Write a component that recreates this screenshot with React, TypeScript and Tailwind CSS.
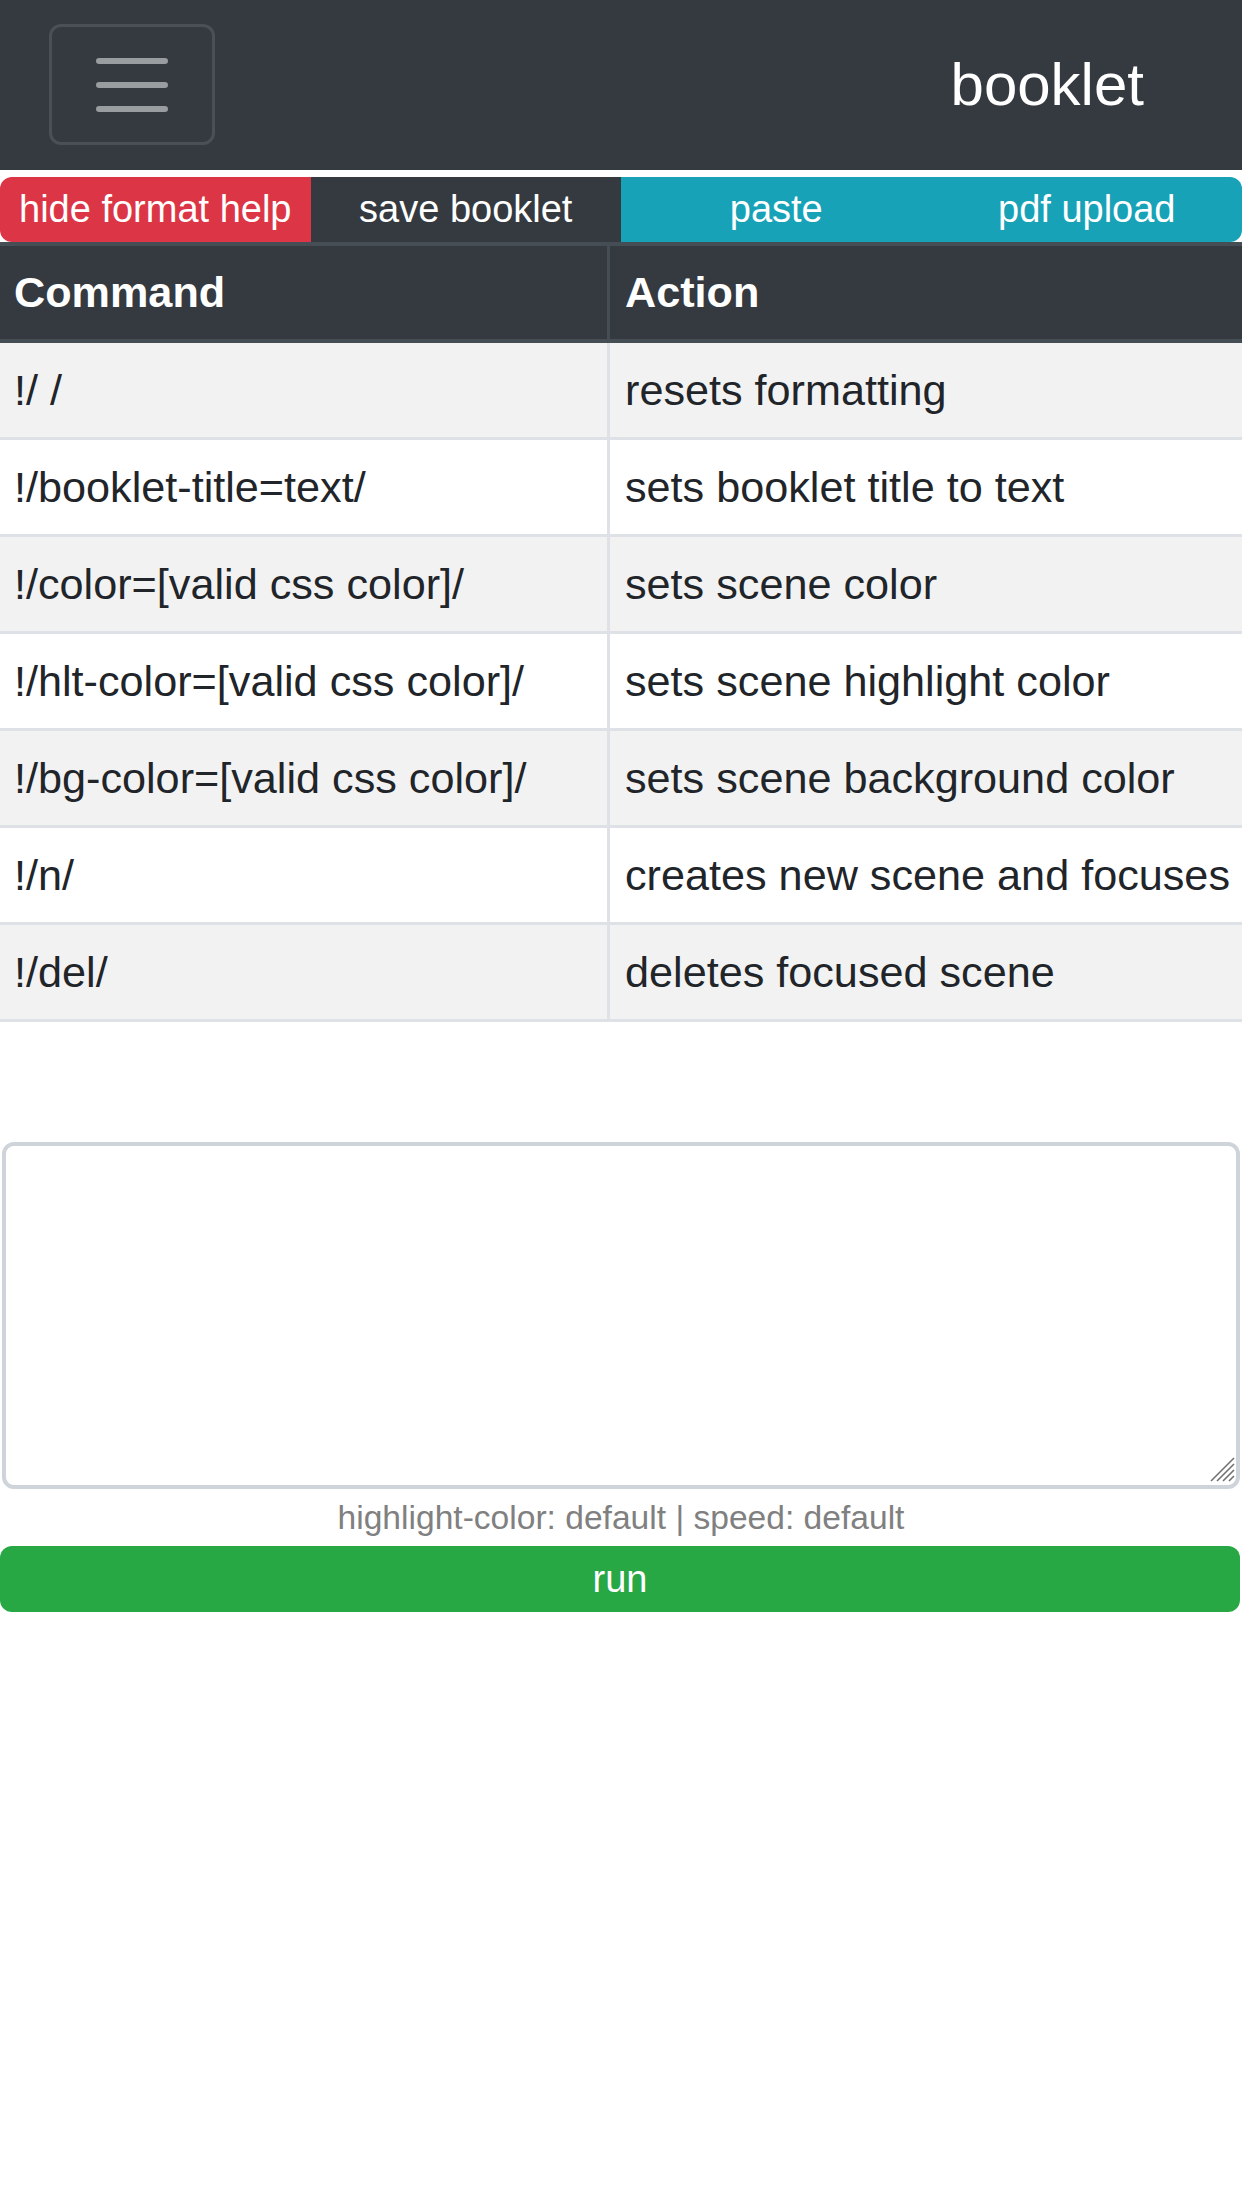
const rows: [string, string][] = [
  ["!/ /", "resets formatting"],
  ["!/booklet-title=text/", "sets booklet title to text"],
  ["!/color=[valid css color]/", "sets scene color"],
  ["!/hlt-color=[valid css color]/", "sets scene highlight color"],
  ["!/bg-color=[valid css color]/", "sets scene background color"],
  ["!/n/", "creates new scene and focuses"],
  ["!/del/", "deletes focused scene"],
];

const App = () => {
  return (
    <div className="min-h-[2208px] w-[1242px] bg-white font-['Liberation_Sans',Arial,sans-serif] text-[#212529]">
      {/* navbar */}
      <nav className="flex h-[170px] items-start justify-between bg-[#343a40] pl-[49px] pr-[98px] pt-[24px]">
        <button className="flex h-[121px] w-[166px] items-center justify-center rounded-[12px] border-[3px] border-[#4a5055]">
          <svg width="90" height="90" viewBox="0 0 30 30">
            <path
              d="M4 7h22M4 15h22M4 23h22"
              stroke="rgba(255,255,255,0.5)"
              strokeWidth="2"
              strokeLinecap="round"
            />
          </svg>
        </button>
        <span className="mt-[16px] text-[60px] leading-[90px] text-white">booklet</span>
      </nav>

      {/* button group */}
      <div className="mt-[7px] grid h-[65px] grid-cols-4 text-[38px] leading-[65px] text-white">
        <button className="rounded-l-[12px] bg-[#dc3545] text-center">hide format help</button>
        <button className="bg-[#343a40] text-center">save booklet</button>
        <button className="bg-[#17a2b8] text-center">paste</button>
        <button className="rounded-r-[12px] bg-[#17a2b8] text-center">pdf upload</button>
      </div>

      {/* format table */}
      <div className="text-[43.2px]">
        <div className="flex h-[101px] border-y-4 border-[#454d55] bg-[#343a40] font-bold text-white">
          <div className="w-[607px] pl-[14px] leading-[93px]">Command</div>
          <div className="w-[3px] bg-[#454d55]" />
          <div className="flex-1 pl-[15px] leading-[93px]">Action</div>
        </div>
        {rows.map(([cmd, action], i) => (
          <div
            key={cmd}
            className={`flex h-[97px] border-b-[3px] border-[#dee2e6] ${i % 2 === 0 ? "bg-[#f2f2f2]" : "bg-white"}`}
          >
            <div className="w-[607px] whitespace-nowrap pl-[14px] leading-[94px]">{cmd}</div>
            <div className="w-[3px] bg-[#dee2e6]" />
            <div className="flex-1 whitespace-nowrap pl-[15px] leading-[94px]">{action}</div>
          </div>
        ))}
      </div>

      {/* input */}
      <div className="relative mt-[120px] px-[2px]">
        <textarea className="block h-[347px] w-full resize-none rounded-[12px] border-4 border-[#ced4da] bg-white p-[18px] text-[42px] outline-none" />
        <svg
          className="pointer-events-none absolute bottom-[7px] right-[7px]"
          width="26"
          height="26"
          viewBox="0 0 26 26"
        >
          <g stroke="#707070" strokeWidth="1.6">
            <path d="M2 25L25 2" />
            <path d="M8 25L25 8" />
            <path d="M14 25L25 14" />
            <path d="M20 25L25 20" />
          </g>
        </svg>
      </div>
      <div className="h-[57px] text-center text-[33.6px] leading-[57px] text-[#808080]">
        highlight-color: default | speed: default
      </div>
      <button className="block h-[66px] w-[1240px] rounded-[12px] bg-[#28a745] text-center text-[38px] leading-[66px] text-white">
        run
      </button>
    </div>
  );
};

export default App;
